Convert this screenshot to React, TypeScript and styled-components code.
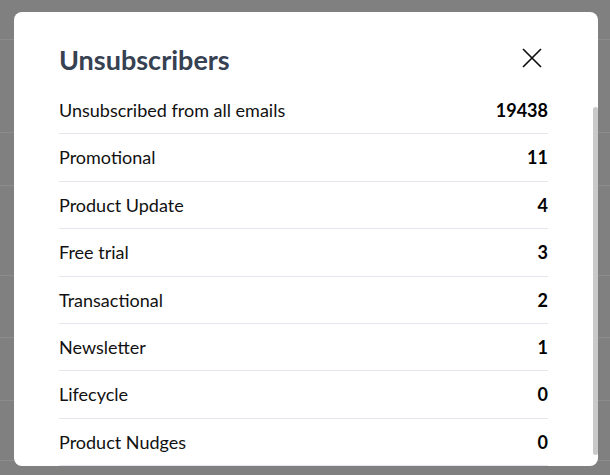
import styled, { createGlobalStyle } from "styled-components";

const GlobalStyle = createGlobalStyle`
	html, body {
		margin: 0;
		padding: 0;
	}
	body {
		width: 610px;
		height: 475px;
		overflow: hidden;
		background: #808080;
		font-family: Lato, "Noto Sans", sans-serif;
	}
`;

const Page = styled.div`
	position: relative;
	width: 610px;
	height: 475px;
	overflow: hidden;
`;

const Backdrop = styled.div`
	display: flex;
	flex-direction: column;
`;

const BackdropRow = styled.div<{ $h: number }>`
	height: ${(p) => p.$h}px;
	box-sizing: border-box;
	border-bottom: 1px solid #8c8c8c;
`;

const Overlay = styled.div`
	position: absolute;
	inset: 0;
	padding: 12px 12px 9px 14px;
	box-sizing: border-box;
	display: flex;
`;

const Modal = styled.div`
	position: relative;
	flex: 1;
	background: #fff;
	border-radius: 8px;
	overflow: hidden;
	padding: 32px 50px 0 45px;
	box-sizing: border-box;
`;

const Header = styled.div`
	display: flex;
	align-items: center;
	justify-content: space-between;
	margin-bottom: 11px;
`;

const Title = styled.h2`
	margin: 0;
	font-size: 27px;
	line-height: 32px;
	font-weight: 700;
	color: #364152;
`;

const CloseButton = styled.button`
	width: 32px;
	height: 32px;
	padding: 0;
	border: 0;
	background: transparent;
	display: flex;
	align-items: center;
	justify-content: center;
	margin-top: -4px;
	cursor: pointer;
`;

const List = styled.ul`
	list-style: none;
	margin: 0;
	padding: 0;
`;

const Row = styled.li`
	display: flex;
	justify-content: space-between;
	align-items: center;
	padding: 12px 0;
	font-size: 18px;
	line-height: 22.4px;
	color: #111;
	border-bottom: 1px solid #e4e7ee;
`;

const Count = styled.span`
	font-weight: 700;
	color: #000;
`;

const ScrollThumb = styled.div`
	position: absolute;
	right: 0;
	top: 95px;
	width: 5px;
	height: 348px;
	border-radius: 3px;
	background: #c9c9c9;
`;

const ROWS = [
	{ label: "Unsubscribed from all emails", count: 19438 },
	{ label: "Promotional", count: 11 },
	{ label: "Product Update", count: 4 },
	{ label: "Free trial", count: 3 },
	{ label: "Transactional", count: 2 },
	{ label: "Newsletter", count: 1 },
	{ label: "Lifecycle", count: 0 },
	{ label: "Product Nudges", count: 0 },
];

const BACK_ROWS = [40, 93, 53, 90, 62, 63, 60];

const App = () => {
	return (
		<Page>
			<GlobalStyle />
			<Backdrop>
				{BACK_ROWS.map((h, i) => (
					<BackdropRow $h={h} key={i} />
				))}
			</Backdrop>
			<Overlay>
				<Modal>
					<Header>
						<Title>Unsubscribers</Title>
						<CloseButton aria-label="Close">
							<svg width="20" height="20" viewBox="0 0 20 20">
								<path d="M1 1 L19 19 M19 1 L1 19" stroke="#111" strokeWidth="1.7" fill="none" />
							</svg>
						</CloseButton>
					</Header>
					<List>
						{ROWS.map((r) => (
							<Row key={r.label}>
								<span>{r.label}</span>
								<Count>{r.count}</Count>
							</Row>
						))}
					</List>
					<ScrollThumb />
				</Modal>
			</Overlay>
		</Page>
	);
};

export default App;
